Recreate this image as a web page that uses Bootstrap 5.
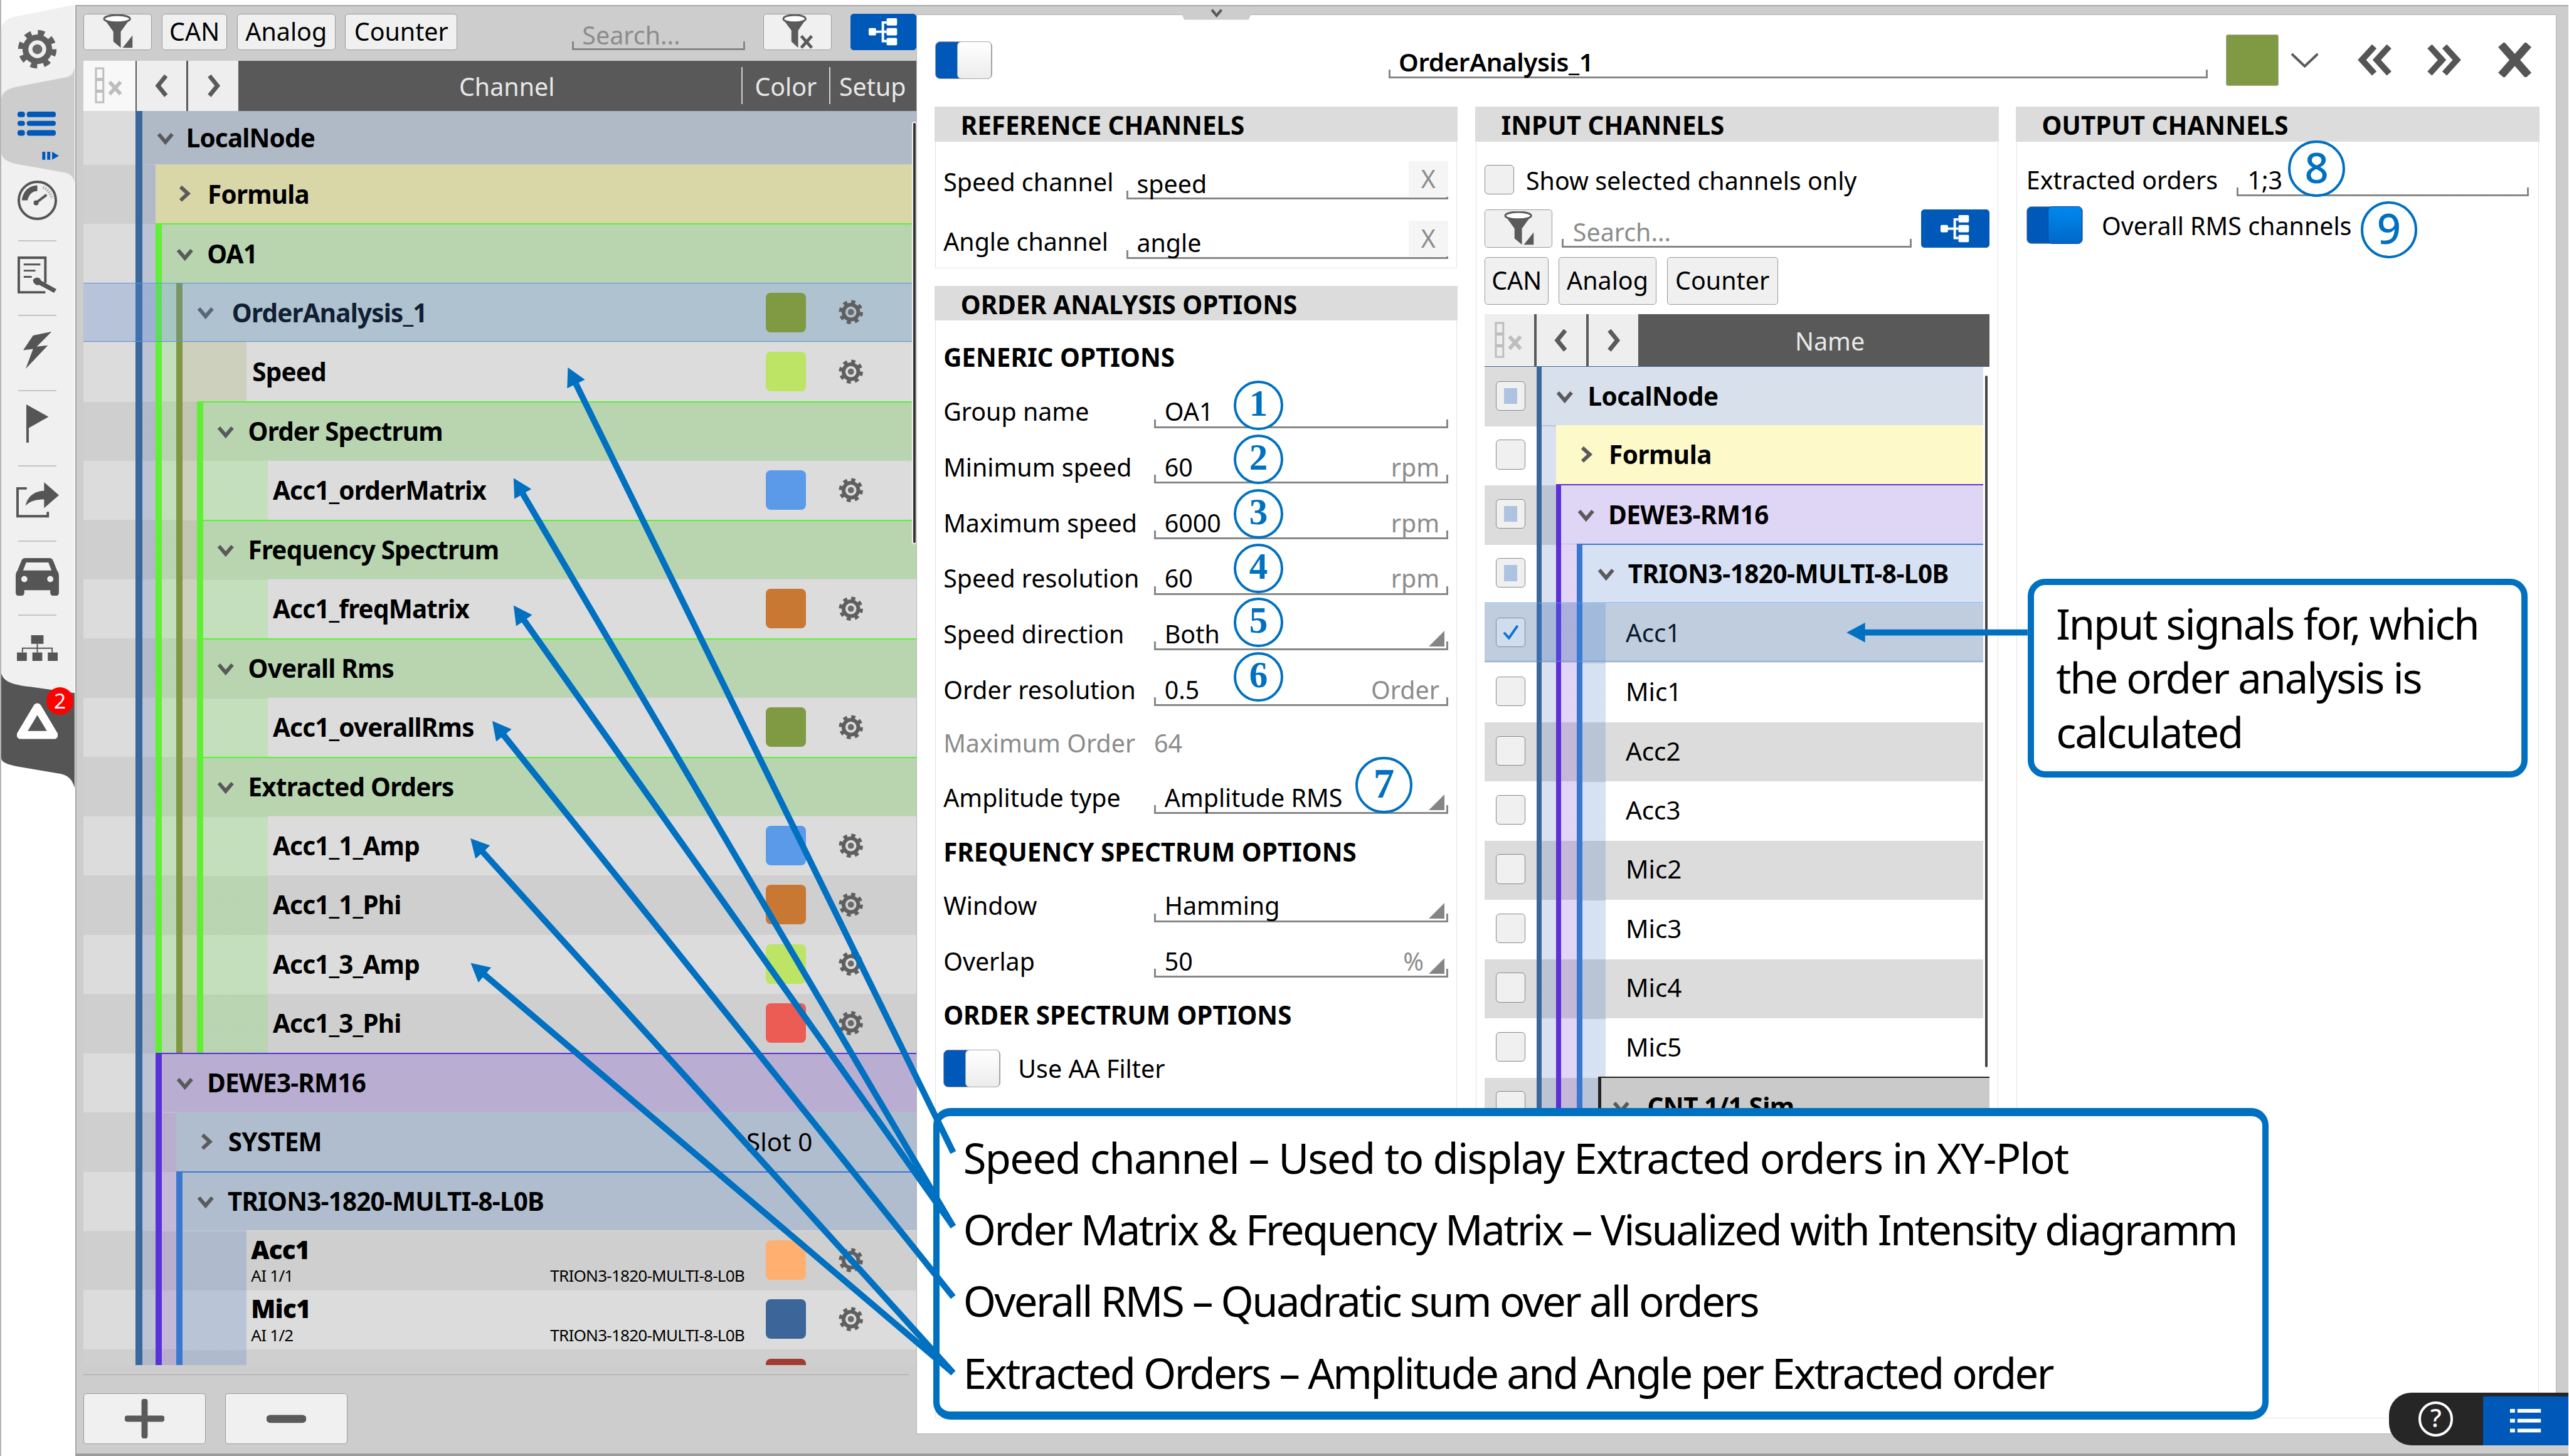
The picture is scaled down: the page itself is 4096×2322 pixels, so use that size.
<!DOCTYPE html>
<html lang="en">
<head>
<meta charset="UTF-8" />
<title>Order Analysis setup</title>
<link href="https://cdn.jsdelivr.net/npm/bootstrap@5.3.3/dist/css/bootstrap.min.css" rel="stylesheet" />
<style>
  :root { --dark:#555; --accent:#0070c0; --zb:repeating-linear-gradient(180deg,#dcdcdc -20.7px,#dcdcdc 75.2px,#cfcfcf 75.2px,#cfcfcf 171.1px); }
  html,body { margin:0; width:4096px; height:2322px; overflow:hidden; background:#fff; }
  body { font-family:"Noto Sans","Liberation Sans",sans-serif; font-stretch:75%; color:#000; }
  .stage { zoom:.985; position:relative; width:4157px; height:2357px; display:flex; font-size:40px; line-height:52px; background:#fff; }

  /* left rail */
  .rail { width:122px; flex:none; position:relative; border-left:3px solid #b5b5b5; }
  .rail-bg { position:absolute; left:-3px; top:0; width:122px; height:2357px; }
  .rail-in { position:relative; display:flex; flex-direction:column; align-items:center; padding-right:3px; }
  .ri { display:flex; align-items:center; justify-content:center; width:100%; }
  .rdiv { width:62px; height:2px; background:#c4c4c4; }
  .ri-red { position:absolute; left:73px; top:1113px; width:44px; height:44px; border-radius:50%; background:#f00; color:#fff; font-size:34px; line-height:44px; text-align:center; }

  /* work area */
  .work { flex:1; min-width:0; margin-top:8px; background:#cdcdcd; border-top:3px solid #a8a8a8; border-left:3px solid #a8a8a8; border-bottom:5px solid #9c9c9c; display:flex; height:2349px; }
  .chan { width:1359px; flex:none; padding-left:11px; }
  .tools { height:59px; margin-top:12px; display:flex; align-items:stretch; }
  .tbtn { display:flex; align-items:center; justify-content:center; background:#f0f0f0; border:2px solid #9a9a9a; border-radius:5px; color:#000; padding:0; font-size:40px; line-height:1; }
  .tbtn.on { background:#0058b8; border-color:#0058b8; }
  .ufield { display:flex; align-items:flex-end; position:relative;
    background:linear-gradient(#858585,#858585) left bottom/3px 14px no-repeat, linear-gradient(#858585,#858585) right bottom/3px 14px no-repeat, linear-gradient(#858585,#858585) bottom/100% 3px no-repeat; }
  .hint { color:#8c8c8c; }
  .thead { display:flex; height:82px; margin-top:17px; background:#595959; color:#e8e8e8; }
  .hbtn { display:flex; align-items:center; justify-content:center; width:81px; background:#eee; margin-right:3px; flex:none; }
  .hbtn.first { background:#f8f8f8; width:84px; margin-right:2px; }
  .hcol { display:flex; align-items:center; height:100%; padding-top:3px; }
  .hsep { width:2px; height:60px; background:#d0d0d0; align-self:center; flex:none; }

  /* tree */
  .ch-tree { position:relative; height:2030px; width:1348px; overflow:hidden; padding-left:84px; background:var(--zb) fixed; }
  .grp { --tint:transparent; background:linear-gradient(var(--tint),var(--tint)) fixed, var(--zb) fixed; border-left:11px solid transparent; }
  .g-blue { --tint:rgba(32,73,170,.17); border-left:12px solid #3a679c; }
  .g-green { --tint:rgba(73,238,32,.17); border-left-color:#5fef35; }
  .g-olive { --tint:rgba(126,149,32,.17); border-left-color:#7f9740; }
  .g-purple { --tint:rgba(73,8,197,.17); border-left-color:#5a30d8; }
  .g-trion { --tint:rgba(14,85,190,.17); border-left-color:#3a78d0; }
  .tr { height:95.9px; display:flex; align-items:center; position:relative; font-weight:700; font-size:41px; letter-spacing:-.8px; white-space:nowrap; }
  .tr.first { height:86px; }
  .tr.leaf { background:var(--zb) fixed; padding-right:86px; }
  .ch { width:28px; height:28px; flex:none; }
  .swatch { width:65px; height:64px; border-radius:8px; margin-left:auto; margin-right:52px; flex:none; position:relative; z-index:1; }
  .gear { width:40px; height:40px; flex:none; position:relative; z-index:1; }
  .sel::after { content:""; position:absolute; top:0; bottom:0; right:0; left:-163px; background:rgba(90,150,255,.2); border:2px solid #5e96d8; border-right:0; }
  .b-green { border-top:3px solid #5fef35; background:#b8d5b0; }
  .b-purple { border-top:3px solid #5a30d8; background:#b9aed2; }
  .b-trion { border-top:3px solid #3a78d0; background:#b0bdcf; }
  .cell2 { display:flex; flex-direction:column; flex:1; min-width:0; padding-left:7px; }
  .cell2 b { line-height:52px; }
  .cell2 span { display:flex; justify-content:space-between; font-weight:400; font-size:26.5px; line-height:34px; padding-right:35px; }
  .thumb { position:absolute; right:1px; top:19px; width:4px; height:680px; background:#333; border-radius:2px; box-shadow:0 0 0 2px #eee; z-index:2; }
  .chan-foot { margin-top:15px; padding-top:30px; border-top:2px solid #a5a5a5; width:1336px; display:flex; gap:31px; }
  .chan-foot .tbtn { width:198px; height:82px; }

  /* editor */
  .editor { position:relative; width:2655px; flex:none; margin-top:13px; height:2299px; background:#fff; border:1px solid #b5b5b5; padding:32px 0 0 30px; }
  .notch { position:absolute; left:423px; top:-14px; width:124px; height:22px; background:#cdcdcd; clip-path:polygon(0 0,100% 0,92% 100%,8% 100%); display:flex; justify-content:center; }
  .tgl { width:92px; height:61px; border:2px solid #9a9a9a; border-radius:8px; background:#0058b8; position:relative; flex:none; }
  .tgl::after { content:""; position:absolute; right:0; top:-1px; bottom:-1px; width:56px; background:linear-gradient(#fff,#ececec); border-radius:7px; border:1px solid #aaa; }
  .tgl.on::after { background:linear-gradient(#0088f0,#0068c8); border-color:#0048a0; }
  .title-row { height:83px; display:flex; align-items:flex-end; }
  .title-in { width:1326px; margin-left:642px; height:60px; padding-left:16px; font-weight:600; font-size:41px; letter-spacing:-.4px; margin-bottom:12px; line-height:54px; }
  .cols { display:flex; margin-top:35px; }
  .pnl { border:2px solid #e3e3e3; --bs-card-border-radius:0; }
  .pnl > .card-header { height:56px; background:#dcdcdc; border:0; border-radius:0 !important; padding:0 0 0 42px; font-weight:700; font-size:41px; line-height:60px; margin:-2px -2px 0; }
  .pnl > .card-body { padding:0 13px 0 12px; }
  .fld { display:flex; align-items:flex-end; height:90px; white-space:nowrap; }
  .fld .lbl { width:341px; flex:none; }
  .fld .ufield { flex:1; padding:0 14px 0 17px; height:60px; line-height:52px; justify-content:space-between; }
  .tri { width:0; height:0; border-style:solid; border-width:0 0 26px 26px; border-color:transparent transparent #858585 transparent; margin-bottom:6px; margin-right:-8px; }
  .cap { font-weight:700; font-size:41px; height:60px; line-height:60px; white-space:nowrap; }
  .xbtn { width:64px; height:58px; background:#f5f5f5; color:#8c8c8c; text-align:center; line-height:58px; margin-bottom:4px; margin-right:-14px; }
  .cbx { width:48px; height:48px; border:2px solid #888; border-radius:6px; background:#f0f0f0; display:flex; align-items:center; justify-content:center; flex:none; }
  .cbx i { width:22px; height:26px; background:#adc3e0; display:block; }

  /* input channels tree */
  .in-tree { --zb:repeating-linear-gradient(180deg,#fff -77.2px,#fff 18.7px,#dcdcdc 18.7px,#dcdcdc 114.6px);
    position:relative; display:flex; height:1214px; width:817px; overflow:hidden; background:#fff; border-top:2px solid #3a679c; }
  .chk-col { width:84px; flex:none; background:var(--zb) fixed; }
  .chk { height:95.9px; display:flex; align-items:center; justify-content:center; }
  .chk.first { height:94px; }
  .in-nodes { flex:1; padding-right:10px; min-width:0; }
  .in-nodes .grp { border-left-width:9px; }
  .in-nodes .tr { font-size:41px; letter-spacing:-.5px; }
  .in-nodes .tr.first { height:94px; }
  .in-nodes .tr.plain { font-weight:400; letter-spacing:0; background:var(--zb) fixed; padding-left:32px; }
  .in-sel::after { left:-199px; right:0; background:rgba(60,140,240,.18); }
  .cnt { margin-left:-13px; margin-right:-10px; height:96px; border-top:3px solid #222; border-left:6px solid #222; background:#cacaca; }
  .in-thumb { position:absolute; right:3px; top:14px; width:4px; height:1120px; background:#444; border-radius:2px; }

  /* annotations lying over the app */
  .num { position:absolute; z-index:3; width:80px; height:80px; border:5px solid var(--accent); border-radius:50%; background:#fff; color:var(--accent); font-family:"Liberation Serif",serif; font-weight:700; font-size:60px; line-height:66px; text-align:center; }
  .num.big { width:92px; height:92px; line-height:78px; font-size:68px; }
  .num.sans { font-family:"Noto Sans",sans-serif; font-weight:500; }
  .note { position:absolute; z-index:4; background:#fff; border:11px solid var(--accent); border-radius:28px; white-space:nowrap; color:#000; }
  .note-r { left:3282px; top:937px; width:809px; height:322px; padding:18px 0 0 36px; font-size:68px; line-height:88px; letter-spacing:-2.2px; }
  .note-b { left:1511px; top:1794px; width:2161px; height:504px; padding:9px 0 0 38px; font-size:68px; line-height:116px; letter-spacing:-2.65px; border-top-width:14px; border-bottom-width:14px; }
  .note-b .wide { letter-spacing:-1.7px; }
  .arrows { position:absolute; left:0; top:0; z-index:5; pointer-events:none; }
  .help { position:absolute; z-index:6; right:0; top:2255px; width:290px; height:85px; background:#262626; border-radius:36px 0 0 36px; display:flex; }
  .help-q { width:152px; display:flex; align-items:center; justify-content:center; }
  .help-ring { width:56px; height:56px; border:5px solid #fff; border-radius:50%; color:#fff; font-size:40px; line-height:46px; text-align:center; font-weight:500; }
  .help-list { flex:1; background:#0058b8; margin-top:6px; display:flex; align-items:center; justify-content:center; }
</style>
</head>
<body>
<svg width="0" height="0" style="position:absolute">
  <defs>
    <symbol id="cd" viewBox="0 0 28 28"><path d="M3 8 14 21 25 8" fill="none" stroke="#5a5a5a" stroke-width="6"/></symbol>
    <symbol id="cr" viewBox="0 0 28 28"><path d="M8 3 20 14 8 25" fill="none" stroke="#5a5a5a" stroke-width="6"/></symbol>
    <symbol id="gr" viewBox="0 0 40 40"><circle cx="20" cy="20" r="16.5" fill="none" stroke="#5f5f5f" stroke-width="6" stroke-dasharray="6.48 6.48"/><circle cx="20" cy="20" r="12" fill="none" stroke="#5f5f5f" stroke-width="6"/><circle cx="20" cy="20" r="5" fill="#6a6a6a"/></symbol>
    <symbol id="fn" viewBox="0 0 50 56"><ellipse cx="24" cy="7" rx="21" ry="6" fill="#fff" stroke="#5a5a5a" stroke-width="3"/><path d="M5 10C13 14 35 14 43 10L30 28V54L18 44V28Z" fill="#5a5a5a"/><path d="M49 34V54H33Z" fill="#5a5a5a"/></symbol>
    <symbol id="fx" viewBox="0 0 50 56"><ellipse cx="20" cy="7" rx="18" ry="6" fill="#fff" stroke="#5a5a5a" stroke-width="3"/><path d="M3 10C11 14 29 14 37 10L26 26V54L15 44V26Z" fill="#5a5a5a"/><path d="M31 35 48 54M48 35 31 54" stroke="#5a5a5a" stroke-width="5"/></symbol>
    <symbol id="tn" viewBox="0 0 50 46"><g fill="#fff"><rect x="1" y="17" width="12" height="12" rx="2"/><rect x="30" y="1" width="17" height="12" rx="2"/><rect x="30" y="17" width="17" height="12" rx="2"/><rect x="30" y="33" width="17" height="12" rx="2"/><path d="M10 21H30V25H10ZM22 6H30V10H26V36H30V40H22Z"/></g></symbol>
    <symbol id="cx" viewBox="0 0 50 60"><g fill="none" stroke="#bdbdbd" stroke-width="3"><rect x="3" y="2" width="12" height="17"/><rect x="3" y="21" width="12" height="17"/><rect x="3" y="40" width="12" height="17"/></g><path d="M25 24 43 44M43 24 25 44" stroke="#bdbdbd" stroke-width="6"/></symbol>
    <symbol id="cl" viewBox="0 0 28 40"><path d="M21 4 8 20 21 36" fill="none" stroke="#5a5a5a" stroke-width="7"/></symbol>
    <symbol id="cg" viewBox="0 0 28 40"><path d="M7 4 20 20 7 36" fill="none" stroke="#5a5a5a" stroke-width="7"/></symbol>
    <marker id="ah" viewBox="0 0 30 36" refX="1" refY="18" markerUnits="userSpaceOnUse" markerWidth="30" markerHeight="36" orient="auto"><path d="M0 2 30 18 0 34Z" fill="#0070c0"/></marker>
  </defs>
</svg>

<div class="stage">
  <!-- left icon rail -->
  <div class="rail">
    <svg class="rail-bg" viewBox="0 0 122 2357">
      <path d="M3 50C3 38 10 30 25 27L115 9H122V1122L77 1117 20 1108 3 1090Z" fill="#f0f0f0"/>
      <path d="M122 100C122 118 118 122 108 125L30 140C10 144 3 150 3 165V245C3 255 10 262 30 266L105 279C115 281 122 287 122 300Z" fill="#cdcdcd"/>
      <path d="M3 1090C8 1104 20 1108 50 1112L122 1122V1276C118 1262 112 1256 100 1253L30 1241C12 1238 3 1234 3 1227Z" fill="#555"/>
    </svg>
    <div class="rail-in">
      <div class="ri" style="height:135px;padding-top:25px">
        <svg width="64" height="64" viewBox="0 0 40 40"><use href="#gr"/></svg>
      </div>
      <div class="ri" style="height:142px;padding-top:30px">
        <svg width="72" height="84" viewBox="0 0 72 84" fill="#0058b8"><rect x="4" y="2" width="12" height="9" rx="4"/><rect x="19" y="2" width="47" height="9" rx="4"/><rect x="4" y="17" width="12" height="8" rx="4"/><rect x="19" y="17" width="47" height="8" rx="4"/><rect x="4" y="32" width="12" height="9" rx="4"/><rect x="19" y="32" width="47" height="9" rx="4"/><rect x="44" y="67" width="5" height="13"/><rect x="52" y="67" width="5" height="13"/><path d="M60 67 71 73.500 60 80Z"/></svg>
      </div>
      <div class="ri" style="height:90px;padding-top:4px">
        <svg width="66" height="66" viewBox="0 0 66 66"><circle cx="33" cy="33" r="30" fill="none" stroke="#555" stroke-width="4"/><path d="M8 33C10 16 22 9 33 9V18C26 18 20 22 17 33Z" fill="#555"/><path d="M31 37 48 24" stroke="#555" stroke-width="4"/><circle cx="31" cy="37" r="4" fill="#555"/><path d="M42 12C50 15 55 22 57 30" fill="none" stroke="#aaa" stroke-width="5" stroke-dasharray="2 2"/></svg>
      </div>
      <div class="rdiv" style="margin-top:22px"></div>
      <div class="ri" style="height:119px;padding-bottom:10px">
        <svg width="66" height="62" viewBox="0 0 66 62"><path d="M46 44V3H3V59H46" fill="none" stroke="#555" stroke-width="4"/><path d="M11 14H38M11 24H30M11 34H24" stroke="#555" stroke-width="3"/><path d="M26 39C30 33 38 35 39 40L64 54 60 60 36 47C31 49 26 44 26 39Z" fill="#555"/></svg>
      </div>
      <div class="rdiv"></div>
      <div class="ri" style="height:120px;padding-bottom:10px">
        <svg width="46" height="60" viewBox="0 0 46 60"><path d="M46 0 16 6 0 30 16 28 4 60 40 22 22 24Z" fill="#555"/></svg>
      </div>
      <div class="rdiv"></div>
      <div class="ri" style="height:119px;padding-bottom:16px">
        <svg width="40" height="62" viewBox="0 0 40 62"><path d="M2 0 38 20 6 38V62H2Z" fill="#555"/></svg>
      </div>
      <div class="rdiv"></div>
      <div class="ri" style="height:120px;padding-bottom:10px">
        <svg width="70" height="58" viewBox="0 0 70 58"><path d="M18 10H3V55H52V48" fill="none" stroke="#555" stroke-width="4"/><path d="M16 38C20 20 34 14 46 14V0L70 21 46 42V28C34 28 24 30 16 38Z" fill="#555"/></svg>
      </div>
      <div class="rdiv"></div>
      <div class="ri" style="height:118px">
        <svg width="70" height="64" viewBox="0 0 70 64"><path fill="#555" fill-rule="evenodd" d="M16 0H54C58 0 60 2 61 5L67 20C69 23 70 25 70 30V56C70 59 68 61 66 61H60C58 61 56 59 56 56V52H14V56C14 59 12 61 10 61H4C2 61 0 59 0 56V30C0 25 1 23 3 20L9 5C10 2 12 0 16 0ZM17 7 12 20H58L53 7ZM14 29A5 5 0 1 0 14 39 5 5 0 1 0 14 29ZM56 29A5 5 0 1 0 56 39 5 5 0 1 0 56 29Z"/></svg>
      </div>
      <div class="rdiv"></div>
      <div class="ri" style="height:95px;padding-top:10px">
        <svg width="66" height="42" viewBox="0 0 66 42" fill="#555"><rect x="23" y="0" width="20" height="14"/><rect x="0" y="28" width="16" height="14"/><rect x="25" y="28" width="16" height="14"/><rect x="50" y="28" width="16" height="14"/><path d="M32 14H34V20H58V28H56V22H34V28H32V22H10V28H8V20H32Z"/></svg>
      </div>
      <div class="ri" style="height:100px;margin-top:26px">
        <svg width="66" height="60" viewBox="0 0 66 60"><path d="M33 7 60 52H6Z" fill="none" stroke="#fff" stroke-width="13" stroke-linejoin="round"/></svg>
      </div>
      <div class="ri-red">2</div>
    </div>
  </div>

  <div class="work">
    <!-- channel list -->
    <div class="chan">
      <div class="tools">
        <button type="button" class="tbtn" style="width:111px"><svg width="50" height="56"><use href="#fn"/></svg></button>
        <button type="button" class="tbtn ms-3" style="width:106px">CAN</button>
        <button type="button" class="tbtn ms-3" style="width:159px">Analog</button>
        <button type="button" class="tbtn ms-3" style="width:182px">Counter</button>
        <div class="ufield hint" style="width:281px;margin-left:185px;padding-left:17px;line-height:48px">Search...</div>
        <button type="button" class="tbtn" style="width:111px;margin-left:29px"><svg width="50" height="56"><use href="#fx"/></svg></button>
        <button type="button" class="tbtn on" style="width:106px;margin-left:31px"><svg width="50" height="46"><use href="#tn"/></svg></button>
      </div>
      <div class="thead">
        <div class="hbtn first"><svg width="50" height="60"><use href="#cx"/></svg></div>
        <div class="hbtn"><svg width="28" height="40"><use href="#cl"/></svg></div>
        <div class="hbtn"><svg width="28" height="40"><use href="#cg"/></svg></div>
        <div class="hcol justify-content-center" style="width:811px;flex:none;padding-left:52px">Channel</div>
        <div class="hsep"></div>
        <div class="hcol justify-content-center" style="width:140px;flex:none">Color</div>
        <div class="hsep"></div>
        <div class="hcol justify-content-center" style="width:137px;flex:none">Setup</div>
      </div>
      <div class="ch-tree">
        <div class="thumb"></div>
        <div class="grp g-blue">
          <div class="tr first" style="background:#b0b9c6;padding-left:24px"><svg class="ch" style="margin-right:19px"><use href="#cd"/></svg>LocalNode</div>
          <div style="padding-left:22px">
            <div class="tr" style="background:#d9d7a7;padding-left:32px"><svg class="ch" style="margin-right:24px"><use href="#cr"/></svg>Formula</div>
            <div class="grp g-green">
              <div class="tr b-green" style="padding-left:23px"><svg class="ch" style="margin-right:22px"><use href="#cd"/></svg>OA1</div>
              <div style="padding-left:23px">
                <div class="grp g-olive">
                  <div class="tr sel" style="background:#c3cec4;padding-left:23px;padding-right:86px"><svg class="ch" style="margin-right:29px"><use href="#cd"/></svg>OrderAnalysis_1<span class="swatch" style="background:#7f9a43"></span><svg class="gear"><use href="#gr"/></svg></div>
                  <div style="padding-left:23px">
                    <div style="margin-left:-23px;padding-left:104px"><div class="tr leaf" style="padding-left:9px">Speed<span class="swatch" style="background:#bde464"></span><svg class="gear"><use href="#gr"/></svg></div></div>
                    <div class="grp g-green">
                      <div class="tr b-green" style="padding-left:23px"><svg class="ch" style="margin-right:22px"><use href="#cd"/></svg>Order Spectrum</div>
                      <div style="padding-left:105px"><div class="tr leaf" style="padding-left:8px">Acc1_orderMatrix<span class="swatch" style="background:#5a9ae8"></span><svg class="gear"><use href="#gr"/></svg></div></div>
                    </div>
                    <div class="grp g-green">
                      <div class="tr b-green" style="padding-left:23px"><svg class="ch" style="margin-right:22px"><use href="#cd"/></svg>Frequency Spectrum</div>
                      <div style="padding-left:105px"><div class="tr leaf" style="padding-left:8px">Acc1_freqMatrix<span class="swatch" style="background:#c87832"></span><svg class="gear"><use href="#gr"/></svg></div></div>
                    </div>
                    <div class="grp g-green">
                      <div class="tr b-green" style="padding-left:23px"><svg class="ch" style="margin-right:22px"><use href="#cd"/></svg>Overall Rms</div>
                      <div style="padding-left:105px"><div class="tr leaf" style="padding-left:8px">Acc1_overallRms<span class="swatch" style="background:#7f9a43"></span><svg class="gear"><use href="#gr"/></svg></div></div>
                    </div>
                    <div class="grp g-green">
                      <div class="tr b-green" style="padding-left:23px"><svg class="ch" style="margin-right:22px"><use href="#cd"/></svg>Extracted Orders</div>
                      <div style="padding-left:105px">
                        <div class="tr leaf" style="padding-left:8px">Acc1_1_Amp<span class="swatch" style="background:#5a9ae8"></span><svg class="gear"><use href="#gr"/></svg></div>
                        <div class="tr leaf" style="padding-left:8px">Acc1_1_Phi<span class="swatch" style="background:#c87832"></span><svg class="gear"><use href="#gr"/></svg></div>
                        <div class="tr leaf" style="padding-left:8px">Acc1_3_Amp<span class="swatch" style="background:#bde464"></span><svg class="gear"><use href="#gr"/></svg></div>
                        <div class="tr leaf" style="padding-left:8px">Acc1_3_Phi<span class="swatch" style="background:#ec5c54"></span><svg class="gear"><use href="#gr"/></svg></div>
                      </div>
                    </div>
                  </div>
                </div>
              </div>
            </div>
            <div class="grp g-purple">
              <div class="tr b-purple" style="padding-left:23px"><svg class="ch" style="margin-right:22px"><use href="#cd"/></svg>DEWE3-RM16</div>
              <div style="padding-left:23px">
                <div class="tr" style="background:#b0bdcf;padding-left:34px"><svg class="ch" style="margin-right:22px"><use href="#cr"/></svg>SYSTEM<span class="ms-auto fw-normal" style="margin-right:168px;letter-spacing:0">Slot 0</span></div>
                <div class="grp g-trion">
                  <div class="tr b-trion" style="padding-left:23px"><svg class="ch" style="margin-right:22px"><use href="#cd"/></svg>TRION3-1820-MULTI-8-L0B</div>
                  <div style="padding-left:104px">
                    <div class="tr leaf"><div class="cell2"><b>Acc1</b><span>AI 1/1<em class="fst-normal">TRION3-1820-MULTI-8-L0B</em></span></div><span class="swatch" style="background:#ffb070;margin-left:0"></span><svg class="gear"><use href="#gr"/></svg></div>
                    <div class="tr leaf"><div class="cell2"><b>Mic1</b><span>AI 1/2<em class="fst-normal">TRION3-1820-MULTI-8-L0B</em></span></div><span class="swatch" style="background:#3c6699;margin-left:0"></span><svg class="gear"><use href="#gr"/></svg></div>
                    <div class="tr leaf"><div class="cell2"><b>Acc2</b></div><span class="swatch" style="background:#a03c34;margin-left:0"></span><svg class="gear"><use href="#gr"/></svg></div>
                  </div>
                </div>
              </div>
            </div>
          </div>
        </div>
      </div>
      <div class="chan-foot">
        <button type="button" class="tbtn"><svg width="64" height="64" viewBox="0 0 64 64"><path d="M32 4V60M4 32H60" stroke="#5a5a5a" stroke-width="10" stroke-linecap="round"/></svg></button>
        <button type="button" class="tbtn"><svg width="64" height="20" viewBox="0 0 64 20"><path d="M6 10H58" stroke="#5a5a5a" stroke-width="13" stroke-linecap="round"/></svg></button>
      </div>
    </div>

    <!-- analysis editor -->
    <div class="editor">
      <div class="notch"><svg width="28" height="20" viewBox="0 0 28 28"><use href="#cd"/></svg></div>
      <div class="title-row">
        <div class="tgl" style="margin-bottom:11px"></div>
        <div class="ufield title-in">OrderAnalysis_1</div>
        <div style="width:85px;height:83px;background:#7f9a43;border:1px solid #aaa;border-radius:3px;margin-left:29px;flex:none"></div>
        <svg style="margin-left:19px;margin-bottom:29px" width="48" height="26" viewBox="0 0 48 26"><path d="M3 3 24 23 45 3" fill="none" stroke="#5a5a5a" stroke-width="4"/></svg>
        <svg style="margin-left:58px;margin-bottom:16px" width="62" height="52" viewBox="0 0 62 52"><path d="M30 4 10 26 30 48M54 4 34 26 54 48" fill="none" stroke="#555" stroke-width="10"/></svg>
        <svg style="margin-left:50px;margin-bottom:16px" width="62" height="52" viewBox="0 0 62 52"><path d="M8 4 28 26 8 48M32 4 52 26 32 48" fill="none" stroke="#555" stroke-width="10"/></svg>
        <svg style="margin-left:56px;margin-bottom:14px" width="56" height="56" viewBox="0 0 56 56"><path d="M6 3 50 53M50 3 6 53" stroke="#555" stroke-width="13"/></svg>
      </div>
      <div class="cols">
        <div style="width:844px;flex:none">
          <div class="card pnl" style="height:261px">
            <div class="card-header">REFERENCE CHANNELS</div>
            <div class="card-body">
              <div class="fld" style="height:94px"><span class="lbl" style="width:296px;margin-bottom:2px">Speed channel</span><div class="ufield" style="line-height:50px">speed<span class="xbtn">X</span></div></div>
              <div class="fld" style="height:96px"><span class="lbl" style="width:296px;margin-bottom:2px">Angle channel</span><div class="ufield" style="line-height:50px">angle<span class="xbtn">X</span></div></div>
            </div>
          </div>
          <div class="card pnl" style="height:1832px;margin-top:29px">
            <div class="card-header">ORDER ANALYSIS OPTIONS</div>
            <div class="card-body">
              <div class="cap" style="margin-top:29px">GENERIC OPTIONS</div>
              <div class="fld" style="height:85px"><span class="lbl">Group name</span><div class="ufield">OA1</div></div>
              <div class="fld"><span class="lbl">Minimum speed</span><div class="ufield">60<span class="hint">rpm</span></div></div>
              <div class="fld"><span class="lbl">Maximum speed</span><div class="ufield">6000<span class="hint">rpm</span></div></div>
              <div class="fld"><span class="lbl">Speed resolution</span><div class="ufield">60<span class="hint">rpm</span></div></div>
              <div class="fld"><span class="lbl">Speed direction</span><div class="ufield">Both<span class="tri"></span></div></div>
              <div class="fld"><span class="lbl">Order resolution</span><div class="ufield">0.5<span class="hint">Order</span></div></div>
              <div class="fld hint" style="height:87px"><span class="lbl">Maximum Order</span><span>64</span></div>
              <div class="fld" style="height:88px"><span class="lbl">Amplitude type</span><div class="ufield">Amplitude RMS<span class="tri"></span></div></div>
              <div class="cap" style="margin-top:31px">FREQUENCY SPECTRUM OPTIONS</div>
              <div class="fld" style="height:84px"><span class="lbl">Window</span><div class="ufield">Hamming<span class="tri"></span></div></div>
              <div class="fld"><span class="lbl">Overlap</span><div class="ufield">50<span class="d-flex align-items-end"><span class="hint me-2">%</span><span class="tri"></span></span></div></div>
              <div class="cap" style="margin-top:30px">ORDER SPECTRUM OPTIONS</div>
              <div class="d-flex align-items-center" style="margin-top:27px"><div class="tgl"></div><span style="margin-left:29px">Use AA Filter</span></div>
            </div>
          </div>
        </div>
        <div class="card pnl" style="width:846px;height:2122px;margin-left:31px;flex:none">
          <div class="card-header">INPUT CHANNELS</div>
          <div class="card-body" style="padding:0">
            <div class="d-flex align-items-center" style="margin:38px 0 0 13px;height:48px"><span class="cbx"></span><span style="margin-left:19px;margin-top:3px">Show selected channels only</span></div>
            <div class="d-flex" style="margin:24px 0 0 13px;height:62px">
              <button type="button" class="tbtn" style="width:110px"><svg width="50" height="56"><use href="#fn"/></svg></button>
              <div class="ufield hint" style="width:566px;margin-left:15px;padding-left:18px;line-height:50px">Search...</div>
              <button type="button" class="tbtn on" style="width:110px;margin-left:16px"><svg width="50" height="46"><use href="#tn"/></svg></button>
            </div>
            <div class="d-flex" style="margin:15px 0 0 13px;height:77px">
              <button type="button" class="tbtn" style="width:104px">CAN</button>
              <button type="button" class="tbtn" style="width:158px;margin-left:16px">Analog</button>
              <button type="button" class="tbtn" style="width:180px;margin-left:17px">Counter</button>
            </div>
            <div style="margin:16px 0 0 13px">
              <div class="thead" style="width:817px;margin-top:0;height:84px">
                <div class="hbtn" style="width:80px;margin-right:4px"><svg width="50" height="60"><use href="#cx"/></svg></div>
                <div class="hbtn" style="width:80px;margin-right:5px"><svg width="28" height="40"><use href="#cl"/></svg></div>
                <div class="hbtn" style="width:80px;margin-right:0"><svg width="28" height="40"><use href="#cg"/></svg></div>
                <div class="hcol flex-grow-1 justify-content-center" style="padding-left:52px">Name</div>
              </div>
              <div class="in-tree">
                <div class="in-thumb"></div>
                <div class="chk-col">
                  <div class="chk first"><span class="cbx"><i></i></span></div>
                  <div class="chk"><span class="cbx"></span></div>
                  <div class="chk"><span class="cbx"><i></i></span></div>
                  <div class="chk"><span class="cbx"><i></i></span></div>
                  <div class="chk"><span class="cbx"><svg width="30" height="30" viewBox="0 0 30 30"><path d="M4 16 12 25 26 5" fill="none" stroke="#0070d0" stroke-width="4"/></svg></span></div>
                  <div class="chk"><span class="cbx"></span></div>
                  <div class="chk"><span class="cbx"></span></div>
                  <div class="chk"><span class="cbx"></span></div>
                  <div class="chk"><span class="cbx"></span></div>
                  <div class="chk"><span class="cbx"></span></div>
                  <div class="chk"><span class="cbx"></span></div>
                  <div class="chk"><span class="cbx"></span></div>
                  <div class="chk"><span class="cbx"></span></div>
                </div>
                <div class="in-nodes">
                  <div class="grp g-blue">
                    <div class="tr first" style="background:#d8e0ec;padding-left:24px"><svg class="ch" style="margin-right:23px"><use href="#cd"/></svg>LocalNode</div>
                    <div style="padding-left:24px">
                      <div class="tr" style="background:#fdf9c9;padding-left:34px"><svg class="ch" style="margin-right:23px"><use href="#cr"/></svg>Formula</div>
                      <div class="grp g-purple">
                        <div class="tr b-purple" style="background:#dfd5f5;padding-left:26px"><svg class="ch" style="margin-right:22px"><use href="#cd"/></svg>DEWE3-RM16</div>
                        <div style="padding-left:25px">
                          <div class="grp g-trion" style="border-left-width:10px">
                            <div class="tr b-trion" style="background:#d6e2f4;padding-left:24px"><svg class="ch" style="margin-right:22px"><use href="#cd"/></svg>TRION3-1820-MULTI-8-L0B</div>
                            <div style="padding-left:38px">
                              <div class="tr plain sel in-sel">Acc1</div>
                              <div class="tr plain">Mic1</div>
                              <div class="tr plain">Acc2</div>
                              <div class="tr plain">Acc3</div>
                              <div class="tr plain">Mic2</div>
                              <div class="tr plain">Mic3</div>
                              <div class="tr plain">Mic4</div>
                              <div class="tr plain">Mic5</div>
                              <div class="tr cnt" style="padding-left:19px"><svg class="ch" style="margin-right:28px"><use href="#cd"/></svg>CNT 1/1 Sim</div>
                            </div>
                          </div>
                        </div>
                      </div>
                    </div>
                  </div>
                </div>
              </div>
            </div>
          </div>
        </div>
        <div class="card pnl" style="width:846px;height:2122px;margin-left:29px;flex:none">
          <div class="card-header">OUTPUT CHANNELS</div>
          <div class="card-body" style="padding:0 16px 0 15px">
            <div class="fld" style="height:89px"><span style="width:340px;flex:none">Extracted orders</span><div class="ufield" style="flex:1;padding-left:18px;height:60px">1;3</div></div>
            <div class="d-flex align-items-center" style="margin-top:16px"><div class="tgl on"></div><span style="margin-left:30px;margin-top:3px">Overall RMS channels</span></div>
          </div>
        </div>
      </div>
    </div>
  </div>

  <!-- numbered markers -->
  <div class="num" style="left:1997px;top:616px">1</div>
  <div class="num" style="left:1997px;top:704px">2</div>
  <div class="num" style="left:1997px;top:792px">3</div>
  <div class="num" style="left:1997px;top:880px">4</div>
  <div class="num" style="left:1997px;top:968px">5</div>
  <div class="num" style="left:1997px;top:1056px">6</div>
  <div class="num big" style="left:2194px;top:1225px">7</div>
  <div class="num big sans" style="left:3704px;top:227px">8</div>
  <div class="num big sans" style="left:3821px;top:326px">9</div>

  <!-- callouts -->
  <div class="note note-r">Input signals for, which<br>the order analysis is<br>calculated</div>
  <div class="note note-b"><div class="wide">Speed channel – Used to display Extracted orders in XY-Plot</div><div>Order Matrix &amp; Frequency Matrix – Visualized with Intensity diagramm</div><div>Overall RMS – Quadratic sum over all orders</div><div>Extracted Orders – Amplitude and Angle per Extracted order</div></div>

  <svg class="arrows" width="4157" height="2357" viewBox="0 0 4157 2357">
    <g stroke="#0070c0" stroke-width="10" fill="none" marker-end="url(#ah)">
      <line x1="1543" y1="1866" x2="932" y2="621"/>
      <line x1="1543" y1="1986" x2="846" y2="799"/>
      <line x1="1543" y1="1986" x2="848" y2="1004"/>
      <line x1="1543" y1="2100" x2="815" y2="1190"/>
      <line x1="1543" y1="2223" x2="781" y2="1379"/>
      <line x1="1543" y1="2223" x2="784" y2="1578"/>
      <line x1="3282" y1="1024" x2="3018" y2="1024"/>
    </g>
  </svg>

  <div class="help">
    <div class="help-q"><div class="help-ring">?</div></div>
    <div class="help-list"><svg width="56" height="44" viewBox="0 0 56 44" fill="#fff"><rect x="3" y="3" width="8" height="6"/><rect x="15" y="3" width="38" height="6"/><rect x="3" y="19" width="8" height="6"/><rect x="15" y="19" width="38" height="6"/><rect x="3" y="35" width="8" height="6"/><rect x="15" y="35" width="38" height="6"/></svg></div>
  </div>
</div>
<script src="https://cdn.jsdelivr.net/npm/bootstrap@5.3.3/dist/js/bootstrap.bundle.min.js"></script>
</body>
</html>
